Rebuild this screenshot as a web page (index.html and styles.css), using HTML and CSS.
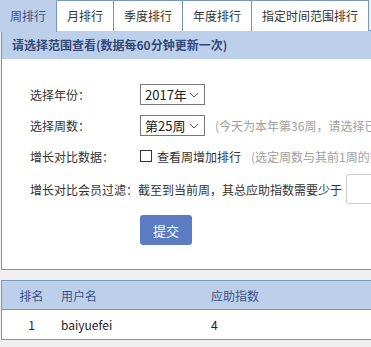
FILE: index.html
```html
<!DOCTYPE html>
<html lang="zh-CN">
<head>
<meta charset="utf-8">
<title>排行</title>
<link rel="stylesheet" href="styles.css">
</head>
<body>
<div class="page">
  <div class="tabs">
    <div class="tab active">周排行</div>
    <div class="tab">月排行</div>
    <div class="tab">季度排行</div>
    <div class="tab">年度排行</div>
    <div class="tab">指定时间范围排行</div>
  </div>
  <div class="panel">
    <div class="panel-head">请选择范围查看(数据每60分钟更新一次)</div>
    <div class="form">
      <div class="row row-year">
        <span class="label">选择年份：</span>
        <div class="select"><span>2017年</span><svg width="10" height="6" viewBox="0 0 10 6"><path d="M1 1 L5 5 L9 1" fill="none" stroke="#555" stroke-width="1"/></svg></div>
      </div>
      <div class="row row-week">
        <span class="label">选择周数：</span>
        <div class="select"><span>第25周</span><svg width="10" height="6" viewBox="0 0 10 6"><path d="M1 1 L5 5 L9 1" fill="none" stroke="#555" stroke-width="1"/></svg></div>
        <span class="hint hint-week">(今天为本年第36周，请选择已经结束的周数)</span>
      </div>
      <div class="row row-cmp">
        <span class="label">增长对比数据：</span>
        <span class="checkbox"></span>
        <span class="check-text">查看周增加排行</span>
        <span class="hint hint-cmp">(选定周数与其前1周的数据进行对比)</span>
      </div>
      <div class="row row-filter">
        <span class="filter-text">增长对比会员过滤：截至到当前周，其总应助指数需要少于</span>
        <div class="input"></div>
      </div>
      <div class="row row-btn">
        <button class="btn" type="button">提交</button>
      </div>
    </div>
  </div>
  <div class="table">
    <div class="tr th">
      <div class="c-rank">排名</div>
      <div class="c-user">用户名</div>
      <div class="c-score">应助指数</div>
    </div>
    <div class="tr td">
      <div class="c-rank">1</div>
      <div class="c-user">baiyuefei</div>
      <div class="c-score">4</div>
    </div>
  </div>
</div>
</body>
</html>
```

FILE: styles.css
```css
html, body {
  margin: 0;
  padding: 0;
  background: #f0f0f0;
  overflow: hidden;
}
body {
  font-family: "Noto Sans CJK SC", "Microsoft YaHei", sans-serif;
  font-size: 12px;
  color: #333;
}
.page {
  width: 760px;
}
.tabs {
  display: flex;
  height: 31px;
  margin-bottom: -1px;
  position: relative;
  z-index: 1;
}
.tab {
  padding: 0 10px;
  height: 31px;
  line-height: 30px;
  background: #fff;
  border-top: 1px solid #7996c0;
  border-right: 1px solid #7996c0;
  box-sizing: border-box;
  color: #333;
}
.tab.active {
  background: #bdd0eb;
  color: #3c5384;
  height: 32px;
  border-top-color: #bdd0eb;
}
.panel {
  margin-left: 1px;
  background: #fff;
  border: 1px solid #7996c0;
}
.panel-head {
  height: 28px;
  line-height: 28px;
  background: #bdd0eb;
  padding-left: 10px;
  font-weight: bold;
  color: #34497a;
}
.form {
  padding: 25px 0 24px 28px;
  display: flex;
  flex-direction: column;
}
.row {
  display: flex;
  align-items: center;
}
.row-year { height: 21px; }
.row-week { height: 21px; margin-top: 10px; }
.row-cmp { height: 20px; margin-top: 10px; }
.row-filter { height: 30px; margin-top: 8px; }
.row-btn { height: 30px; margin-top: 11px; padding-left: 110px; }
.label {
  width: 110px;
  flex: none;
}
.select {
  width: 65px;
  height: 21px;
  box-sizing: border-box;
  border: 1px solid #777;
  display: flex;
  align-items: center;
  justify-content: space-between;
  padding: 0 5px 0 4px;
  color: #222;
  font-size: 13px;
}
.select svg { flex: none; }
.hint {
  color: #a0a0a0;
}
.hint-week { margin-left: 10px; white-space: nowrap; }
.checkbox {
  width: 12px;
  height: 12px;
  box-sizing: border-box;
  border: 1px solid #333;
  background: #fff;
  flex: none;
  margin-top: -1px;
}
.check-text {
  margin-left: 5px;
}
.hint-cmp { margin-left: 10px; white-space: nowrap; }
.filter-text { white-space: nowrap; }
.input {
  margin-left: 4px;
  width: 120px;
  height: 30px;
  box-sizing: border-box;
  border: 1px solid #ccc;
  border-radius: 3px;
  background: #fff;
  flex: none;
}
.btn {
  width: 52px;
  height: 30px;
  border: none;
  border-radius: 3px;
  background: #5b7bc3;
  color: #fff;
  font-family: inherit;
  font-size: 13px;
  padding: 0;
}
.table {
  margin-top: 10px;
  margin-left: 1px;
  border: 1px solid #7996c0;
  border-bottom: none;
  background: #fff;
}
.tr {
  display: flex;
  align-items: center;
  border-bottom: 1px solid #7996c0;
}
.th {
  height: 28px;
  background: #bdd0eb;
  color: #3c5384;
}
.td {
  height: 29px;
  color: #222;
}
.c-rank {
  width: 59px;
  text-align: center;
}
.c-user {
  width: 150px;
}
.c-score {
  width: 150px;
}
```
